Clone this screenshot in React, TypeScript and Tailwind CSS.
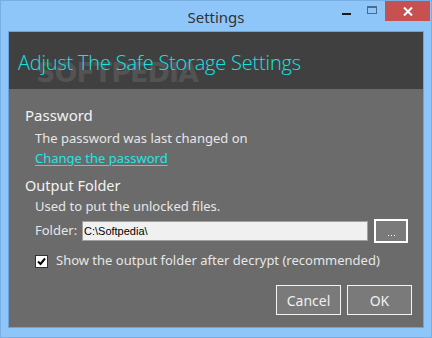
import React from "react";

const ui = { fontFamily: '"Noto Sans", "Open Sans", sans-serif' };

export default function App() {
  return (
    <div
      className="w-[432px] h-[338px] bg-[#8ec6fa] border border-[#78aee2] flex flex-col px-[7px] pb-[9px] select-none"
      style={ui}
    >
      {/* Title bar */}
      <div className="relative h-[30px] flex items-center justify-center shrink-0">
        <span className="text-[15px] text-[#333333] leading-none mt-[2px]">Settings</span>
        <div className="absolute right-[-7px] top-0 flex items-start h-[20px]">
          <div className="w-[26px] h-[20px] flex items-center justify-center">
            <div className="w-[9px] h-[2px] bg-[#1a1a1a] mt-[6px]" />
          </div>
          <div className="w-[26px] h-[20px] flex items-center justify-center">
            <div className="w-[10px] h-[8px] border border-[#4c6b8a] border-t-2 -mt-[3px]" />
          </div>
          <div className="w-[45px] h-[20px] bg-[#c75050] flex items-center justify-center mr-[1px]">
            <svg width="10" height="9" viewBox="0 0 10 9">
              <path d="M1 0.5 L9 8.5 M9 0.5 L1 8.5" stroke="#ffffff" strokeWidth="2" />
            </svg>
          </div>
        </div>
      </div>

      {/* Content */}
      <div className="flex-1 flex flex-col border border-[#6ba3da] bg-[#6b6b6b]">
        <div className="relative h-[57px] bg-[#404040] flex items-center pl-[9px] shrink-0 overflow-hidden">
          <span
            className="absolute left-[27px] top-[27px] text-[27px] font-black tracking-[-1px] text-[#535353] leading-none"
            style={{ fontFamily: '"DejaVu Sans", sans-serif' }}
          >
            SOFTPEDIA
          </span>
          <span
            className="relative text-[20px] font-light tracking-[-0.2px] text-[#12e5e5] leading-none mt-[4px]"
            style={{ fontFamily: '"Open Sans", sans-serif' }}
          >
            Adjust The Safe Storage Settings
          </span>
        </div>

        <div className="flex-1 flex flex-col pl-[16px] pr-[11px] pt-[16px] text-[#f2f2f2]">
          <div className="h-[20px] text-[15px] leading-[20px]">Password</div>
          <div className="pl-[10px] mt-[3px] h-[20px] text-[13px] leading-[20px] text-[#e6e6e6]">
            The password was last changed on
          </div>
          <div className="pl-[10px] h-[20px] text-[13px] leading-[20px]">
            <span className="text-[#1ee6e6] underline underline-offset-2">Change the password</span>
          </div>
          <div className="mt-[7px] h-[20px] text-[14.5px] leading-[20px]">Output Folder</div>
          <div className="pl-[10px] mt-[2px] h-[19px] text-[13px] leading-[19px] text-[#e6e6e6]">
            Used to put the unlocked files.
          </div>
          <div className="pl-[10px] mt-[3px] flex items-center">
            <span className="text-[13px] text-[#e6e6e6] w-[47px]">Folder:</span>
            <div
              className="w-[286px] h-[20px] bg-[#f0f0f0] border border-[#a0a0a0] flex items-center pl-[1px] text-[11px] text-black"
              style={{ fontFamily: '"Liberation Sans", sans-serif' }}
            >
              C:\Softpedia\
            </div>
            <div className="ml-[6px] w-[34px] h-[24px] border-2 border-white bg-[#7a7a7a] flex items-end justify-center pb-[5px]">
              <div className="flex gap-[2px]">
                <div className="w-[1px] h-[1px] bg-white" />
                <div className="w-[1px] h-[1px] bg-white" />
                <div className="w-[1px] h-[1px] bg-white" />
              </div>
            </div>
          </div>
          <div className="pl-[10px] mt-[10px] flex items-center h-[16px]">
            <div className="w-[13px] h-[13px] bg-white border border-[#333333] flex items-center justify-center">
              <svg width="9" height="9" viewBox="0 0 9 9">
                <path d="M1 4.5 L3.5 7 L8 1.5" stroke="#000" strokeWidth="2" fill="none" />
              </svg>
            </div>
            <span className="ml-[8px] text-[13px] text-[#e6e6e6]">
              Show the output folder after decrypt (recommended)
            </span>
          </div>
          <div className="mt-[16px] flex justify-end gap-[6px]">
            <div className="w-[65px] h-[30px] border border-[#f4f4f4] bg-[#7a7a7a] flex items-center justify-center text-[14px] text-[#f0f0f0]">
              Cancel
            </div>
            <div className="w-[65px] h-[30px] border border-[#f4f4f4] bg-[#7a7a7a] flex items-center justify-center text-[14px] text-[#f0f0f0]">
              OK
            </div>
          </div>
        </div>
      </div>
    </div>
  );
}
